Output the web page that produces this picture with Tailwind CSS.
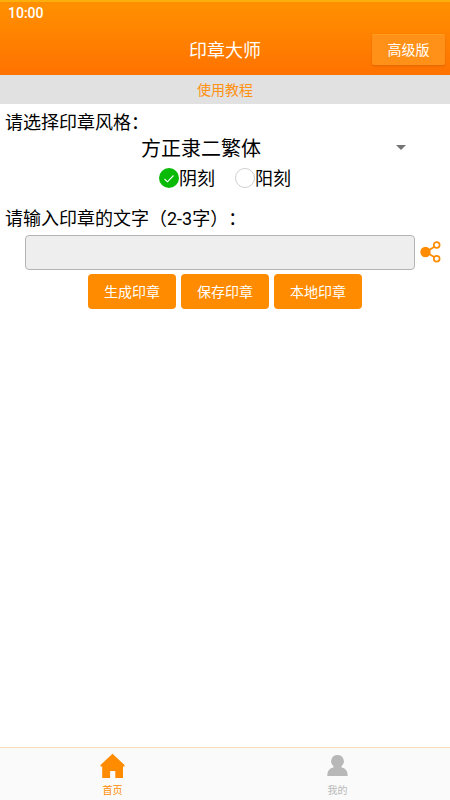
<!DOCTYPE html>
<html lang="zh-CN">
<head>
<meta charset="utf-8">
<meta name="viewport" content="width=device-width, initial-scale=1">
<title>印章大师</title>
<script src="https://cdn.jsdelivr.net/npm/@tailwindcss/browser@4"></script>
</head>
<body class="flex h-[800px] w-[450px] flex-col overflow-hidden bg-white font-[Roboto,'Noto_Sans_CJK_SC',sans-serif] text-black [text-spacing-trim:space-all]">
  <header class="flex h-[75px] shrink-0 flex-col border-t-2 border-[#fbae0c] bg-linear-to-b from-[#ff9000] to-[#ff7200] text-white">
    <div class="h-[24px] shrink-0 pl-[8px] text-[14px] leading-[22px] font-medium">10:00</div>
    <div class="grid h-[50px] shrink-0 grid-cols-[1fr_auto_1fr] items-center pr-[5px] pl-[5px]">
      <h1 class="col-start-2 text-[18px] leading-[50px]">印章大师</h1>
      <button class="mb-[3px] h-[31px] w-[73px] justify-self-end rounded-[2px] border-t border-[#ffa01c] bg-[#ff9119] text-[14px] leading-[30px] shadow-[0_1px_2px_rgba(150,60,0,0.3)]">高级版</button>
    </div>
  </header>
  <a class="h-[29px] shrink-0 bg-[#e1e1e1] pt-px text-center text-[14px] leading-[28px] text-[#ff9113]">使用教程</a>
  <main class="flex flex-1 flex-col">
    <p class="mt-[5px] h-[28px] pl-[5px] text-[18px] leading-[28px]">请选择印章风格：</p>
    <div class="flex h-[24px] items-center pr-[44px] pl-[44px]">
      <span class="flex-1 pr-[38px] text-center text-[20px] leading-[24px]">方正隶二繁体</span>
      <svg class="-mt-[3px] h-[5px] w-[10px]" viewBox="0 0 10 5"><path d="M0 0h10L5 5z" fill="#757575"/></svg>
    </div>
    <div class="mt-[4px] flex h-[26px] items-center justify-center gap-[20px] text-[18px] leading-[26px]">
      <label class="flex items-center">
        <svg class="size-[20px]" viewBox="0 0 20 20"><circle cx="10" cy="10" r="10" fill="#09bb07"/><path d="m5.500 11 3 2.800 6-6.300" fill="none" stroke="#fff" stroke-width="1.100"/></svg>
        <span class="pt-px">阴刻</span>
      </label>
      <label class="flex items-center">
        <svg class="size-[20px]" viewBox="0 0 20 20"><circle cx="10" cy="10" r="9.500" fill="#fff" stroke="#cfcfcf"/></svg>
        <span class="pt-px">阳刻</span>
      </label>
    </div>
    <p class="mt-[14px] h-[28px] pl-[5px] text-[18px] leading-[28px]">请输入印章的文字（2-3字）：</p>
    <div class="mt-px flex h-[36px] items-center pl-[25px]">
      <input class="h-[35px] w-[390px] rounded-[4px] border border-[#b4b4b4] bg-[#eee]" type="text">
      <svg class="ml-[5px] h-[22px] w-[21px]" viewBox="0 0 21 22" fill="none" stroke="#ff8c00" stroke-width="1.700"><path d="m6 11 8-5M6 11l8 5"/><circle cx="5.500" cy="11" r="5.200" fill="#ff8c00" stroke="none"/><circle cx="16.700" cy="4" r="2.900"/><circle cx="16.700" cy="17.700" r="2.900"/></svg>
    </div>
    <div class="mt-[4px] flex justify-center gap-[5px] text-[14px] leading-[35px] text-white">
      <button class="h-[35px] w-[88px] rounded-[4px] bg-[#ff8c00] pt-px">生成印章</button>
      <button class="h-[35px] w-[88px] rounded-[4px] bg-[#ff8c00] pt-px">保存印章</button>
      <button class="h-[35px] w-[88px] rounded-[4px] bg-[#ff8c00] pt-px">本地印章</button>
    </div>
  </main>
  <nav class="grid h-[53px] shrink-0 grid-cols-2 border-t border-[#f9dcb8] bg-[#fafafa] text-[10px] leading-[14px]">
    <a class="flex flex-col items-center pt-[5px] text-[#ff8c00]">
      <svg class="h-[26px] w-[26px]" viewBox="0.5 0 26 26"><path d="M13 .8 25 12v1.500h-1.500V25h-7.700v-7h-5.200v7H2.700V13.500H1V12z" fill="#ff8c00"/></svg>
      <span class="mt-[5px]">首页</span>
    </a>
    <a class="flex flex-col items-center pt-[5px] text-[#b9b9b9]">
      <svg class="h-[26px] w-[26px]" viewBox="0.5 0 26 26"><path d="M13 2a6.300 6.300 0 0 1 4 11.200v1.300c3.700.7 6.200 3 6.200 8.500H2.800c0-5.500 2.500-7.800 6.200-8.500v-1.300A6.300 6.300 0 0 1 13 2z" fill="#b8b8b8"/></svg>
      <span class="mt-[5px]">我的</span>
    </a>
  </nav>
</body>
</html>
